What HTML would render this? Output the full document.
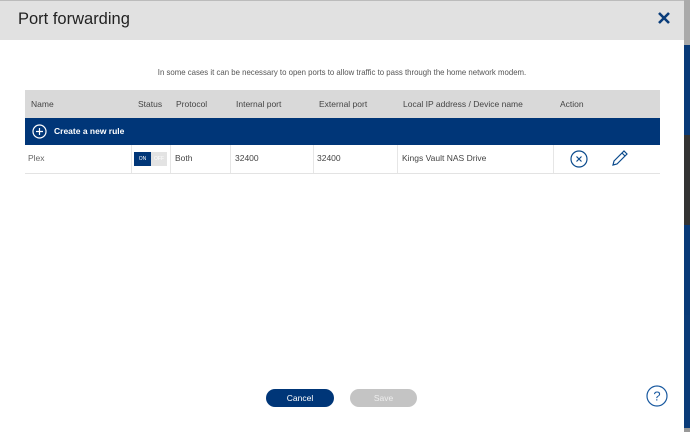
<!DOCTYPE html><html><head><style>
body{margin:0;width:690px;height:432px;overflow:hidden;background:#fff;font-family:"Liberation Sans",sans-serif;position:relative}
.strip{position:absolute;left:684px;width:6px}
.modal{position:absolute;left:0;top:0;width:684px;height:428px;background:#fff;border-top:1px solid #bbb}
.hdr{height:39px;background:#e1e1e1;position:relative}
.hdr h1{margin:0;position:absolute;left:18px;top:9px;font-weight:normal;font-size:16.5px;color:#222;font-family:"Liberation Sans",sans-serif}
.x{position:absolute;left:657px;top:10px}
.intro{position:absolute;top:66px;left:0;width:684px;text-align:center;font-size:8.5px;color:#555;transform:scaleX(0.92)}
.c{position:absolute;font-size:8.5px;color:#444;top:0;line-height:27px}
.row{position:absolute;left:25px;width:635px}
.vb{position:absolute;top:0;bottom:0;width:1px;background:#e6e6e6}
.btn{position:absolute;top:388px;height:18px;border-radius:9px;font-size:8.5px;color:#fff;text-align:center;line-height:18px}
</style></head><body>
<div class="strip" style="top:0;height:45px;background:#aaa"></div>
<div class="strip" style="top:45px;height:90px;background:#083a78"></div>
<div class="strip" style="top:135px;height:90px;background:#333"></div>
<div class="strip" style="top:225px;height:90px;background:#083a78"></div>
<div class="strip" style="top:315px;height:113px;background:#0a3b78"></div>
<div class="strip" style="top:428px;height:4px;background:#999"></div>
<div class="modal">
<div class="hdr"><h1>Port forwarding</h1>
<svg class="x" width="14" height="14" viewBox="0 0 14 14"><path d="M2 2L12 12M12 2L2 12" stroke="#0a3d7a" stroke-width="2.6"/></svg></div>
<div class="intro">In some cases it can be necessary to open ports to allow traffic to pass through the home network modem.</div>
<div class="row" style="top:89px;height:28px;background:#d9d9d9">
<span class="c" style="left:6px;line-height:28px">Name</span><span class="c" style="left:113px;line-height:28px">Status</span><span class="c" style="left:151px;line-height:28px">Protocol</span><span class="c" style="left:211px;line-height:28px">Internal port</span><span class="c" style="left:294px;line-height:28px">External port</span><span class="c" style="left:378px;line-height:28px">Local IP address / Device name</span><span class="c" style="left:535px;line-height:28px">Action</span></div>
<div class="row" style="top:117px;height:27px;background:#003678">
<svg style="position:absolute;left:7px;top:6px" width="15" height="15" viewBox="0 0 15 15"><circle cx="7.5" cy="7.5" r="6.5" fill="none" stroke="#fff" stroke-width="1.2"/><path d="M7.5 4v7M4 7.5h7" stroke="#fff" stroke-width="1.2"/></svg>
<span class="c" style="left:29px;color:#fff;font-weight:bold">Create a new rule</span></div>
<div class="row" style="top:144px;height:28px;border-bottom:1px solid #e3e3e3">
<div class="vb" style="left:106px"></div><div class="vb" style="left:145px"></div><div class="vb" style="left:205px"></div><div class="vb" style="left:288px"></div><div class="vb" style="left:372px"></div><div class="vb" style="left:528px"></div>
<span class="c" style="left:3px;color:#666">Plex</span>
<div style="position:absolute;left:109px;top:7px;width:17px;height:14px;background:#003678;color:#fff;font-size:5px;line-height:14px;text-align:center">ON</div>
<div style="position:absolute;left:126px;top:7px;width:16px;height:14px;background:#e3e3e3;color:#fff;font-size:5px;line-height:14px;text-align:center">OFF</div>
<span class="c" style="left:150px">Both</span><span class="c" style="left:210px">32400</span><span class="c" style="left:292px">32400</span><span class="c" style="left:377px">Kings Vault NAS Drive</span>
<svg style="position:absolute;left:545px;top:5px" width="18" height="18" viewBox="0 0 18 18"><circle cx="9" cy="9" r="8" fill="none" stroke="#0a4a8c" stroke-width="1.2"/><path d="M6.5 6.5l5 5M11.5 6.5l-5 5" stroke="#0a4a8c" stroke-width="1.2"/></svg>
<svg style="position:absolute;left:586px;top:4px" width="18" height="18" viewBox="0 0 18 18"><path d="M2 16l1-4L13 2l3 3L6 15z M11 4l3 3" fill="none" stroke="#0a4a8c" stroke-width="1.2"/></svg>
</div>
<div class="btn" style="left:266px;width:68px;background:#003678">Cancel</div>
<div class="btn" style="left:350px;width:67px;background:#c4c4c4;color:#eee">Save</div>
<svg style="position:absolute;left:646px;top:384px" width="22" height="22" viewBox="0 0 22 22"><circle cx="11" cy="11" r="10" fill="none" stroke="#1a5aa0" stroke-width="1.2"/><text x="11" y="15.5" font-size="13" text-anchor="middle" fill="#1a5aa0" font-family="Liberation Sans">?</text></svg>
</div>
</body></html>
